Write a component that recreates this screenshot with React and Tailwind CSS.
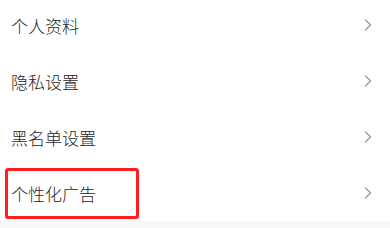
import React from "react";

function Chevron() {
  return (
    <svg width="8" height="12" viewBox="0 0 8 12" fill="none" className="shrink-0">
      <path d="M1.5 1 L6.5 6 L1.5 11" stroke="#9a9a9a" strokeWidth="1.3" strokeLinecap="round" strokeLinejoin="round" />
    </svg>
  );
}

function Row({ label, boxed }) {
  return (
    <div className="relative flex h-[56px] items-center justify-between pl-[11px] pr-[18px]">
      <span className="text-[17px] font-light leading-none text-[#1f1f1f]">{label}</span>
      <Chevron />
      {boxed && (
        <div className="pointer-events-none absolute left-[5px] top-[3px] h-[51px] w-[134px] rounded-[3px] border-[3px] border-[#ff1f1f]" />
      )}
    </div>
  );
}

export default function App() {
  return (
    <div
      className="h-[228px] w-[390px] overflow-hidden bg-[#f7f7f7]"
      style={{ fontFamily: '"Noto Sans CJK SC", "Noto Sans", sans-serif' }}
    >
      <div className="-mt-[3px] bg-white">
        <Row label="个人资料" />
        <Row label="隐私设置" />
        <Row label="黑名单设置" />
        <Row label="个性化广告" boxed />
      </div>
    </div>
  );
}
